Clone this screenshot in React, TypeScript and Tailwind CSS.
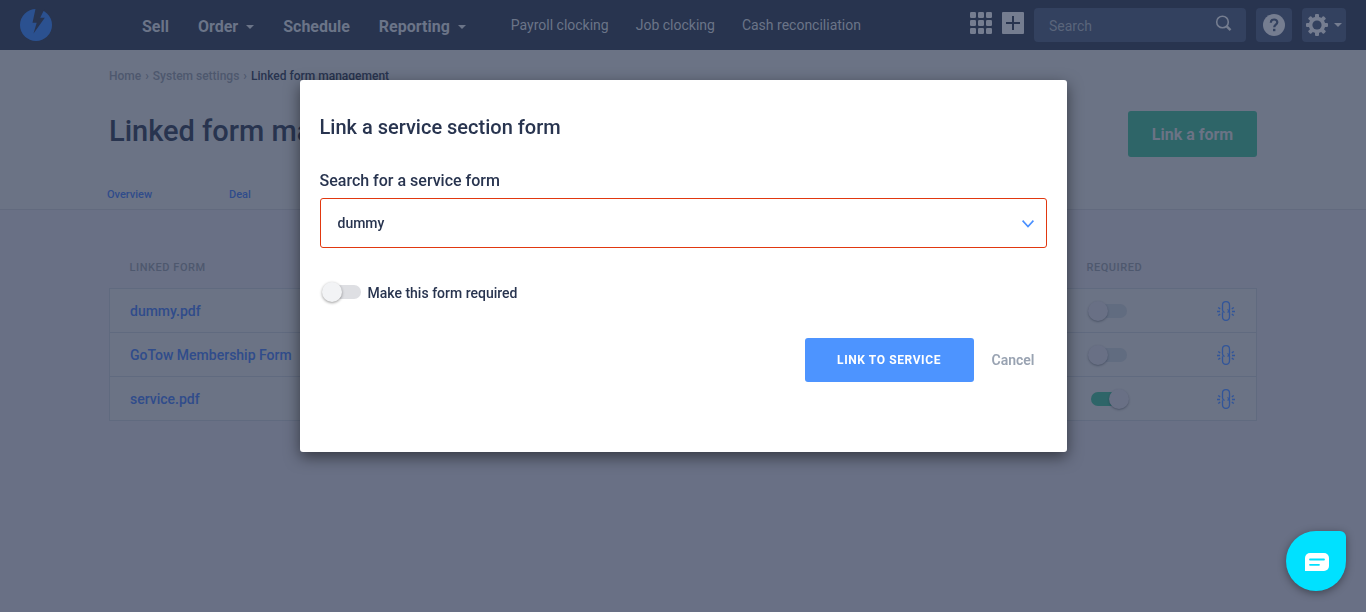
import type { ReactNode } from "react";

const forms = [
  { name: "dummy.pdf", required: false },
  { name: "GoTow Membership Form", required: false },
  { name: "service.pdf", required: true },
];

function Caret() {
  return (
    <svg width="8" height="4" viewBox="0 0 8 4" fill="currentColor" aria-hidden="true">
      <path d="M0 0h8L4 4z" />
    </svg>
  );
}

function UnlinkIcon() {
  return (
    <svg width="18" height="20" viewBox="0 0 18 20" fill="none" stroke="currentColor" strokeWidth="1.3" aria-hidden="true">
      <path d="M7.600 11.500C6.200 11 5.500 10 5.500 8.700V4.200C5.500 2.200 7 .7 9 .7s3.500 1.500 3.500 3.500v4.500c0 1.300-.8 2.200-2 2.600" />
      <path d="M10.400 8.500c1.400.5 2.100 1.500 2.100 2.800v4.500c0 2-1.500 3.500-3.500 3.500s-3.500-1.500-3.500-3.500v-4.500" />
      <path d="M0 10.500h3M1.200 6.500l2 1.400M1.200 14.500l2-1.400M18 10.500h-3M16.800 6.500l-2 1.400M16.800 14.500l-2-1.400" />
    </svg>
  );
}

function NavLink({ children, caret }: { children: ReactNode; caret?: boolean }) {
  return (
    <a href="#" className="flex items-center gap-2 whitespace-nowrap text-base font-bold">
      {children}
      {caret && <Caret />}
    </a>
  );
}

function Header() {
  return (
    <header className="flex h-[50px] items-center bg-[#28344f] px-5 text-[#6b7488]">
      <a href="#" aria-label="Dashboard" className="mr-[90px] shrink-0">
        <svg width="32" height="32" viewBox="0 0 32 32" aria-hidden="true">
          <circle cx="16" cy="16" r="16" fill="#2b5190" />
          <path d="M15.700-1 12.500 13.700h4.200L13.500 24.500 24.800 8.800h-4.600L25-1z" fill="#28344f" />
        </svg>
      </a>
      <nav className="flex items-center gap-[29px] pt-1">
        <NavLink>Sell</NavLink>
        <NavLink caret>Order</NavLink>
        <NavLink>Schedule</NavLink>
        <NavLink caret>Reporting</NavLink>
      </nav>
      <nav className="ml-[45px] flex items-center gap-[27px] whitespace-nowrap text-sm">
        <a href="#">Payroll clocking</a>
        <a href="#">Job clocking</a>
        <a href="#">Cash reconciliation</a>
      </nav>
      <div className="ml-auto flex items-center gap-[10px] text-[#757d90]">
        <button aria-label="Apps" className="-mt-1">
          <svg width="22" height="22" viewBox="0 0 22 22" fill="currentColor" aria-hidden="true">
            {[0, 8, 16].map((y) =>
              [0, 8, 16].map((x) => <rect key={`${x}-${y}`} x={x} y={y} width="6" height="6" rx="1.200" />),
            )}
          </svg>
        </button>
        <button aria-label="Add" className="-mt-1">
          <svg width="22" height="22" viewBox="0 0 22 22" aria-hidden="true">
            <rect width="22" height="22" rx="1" fill="currentColor" />
            <path d="M11 4v14M4 11h14" stroke="#28344f" strokeWidth="2" />
          </svg>
        </button>
        <label className="flex h-[34px] w-[212px] items-center rounded bg-[#33415f] pr-[14px] pl-[15px]">
          <input
            aria-label="Search"
            placeholder="Search"
            className="min-w-0 flex-1 bg-transparent pt-[2px] text-sm outline-none placeholder:text-[#5a657b]"
          />
          <svg width="17" height="17" viewBox="0 0 17 17" fill="none" stroke="currentColor" className="-mt-1" aria-hidden="true">
            <circle cx="7.500" cy="7" r="5.800" strokeWidth="1.600" />
            <path d="m11.500 11.200 4 4" strokeWidth="2.400" />
          </svg>
        </label>
        <button aria-label="Help" className="flex h-[34px] w-9 items-center justify-center rounded bg-[#33415f]">
          <svg width="22" height="22" viewBox="0 0 22 22" aria-hidden="true">
            <circle cx="11" cy="11" r="11" fill="currentColor" />
            <path d="M7.800 8.700c0-2 1.400-3.200 3.300-3.200s3.200 1.100 3.200 2.800c0 2.400-3.100 2.400-3.100 5" fill="none" stroke="#33415f" strokeWidth="2.200" />
            <rect x="10" y="14.800" width="2.400" height="2.400" fill="#33415f" />
          </svg>
        </button>
        <button aria-label="Settings" className="flex h-[34px] w-11 items-center justify-center gap-1.5 rounded bg-[#33415f]">
          <svg width="22" height="22" viewBox="0 0 22 22" fill="currentColor" aria-hidden="true">
            {[0, 45, 90, 135].map((a) => (
              <rect key={a} x="9" y="0" width="4" height="22" rx="1" transform={`rotate(${a} 11 11)`} />
            ))}
            <circle cx="11" cy="11" r="8.300" />
            <circle cx="11" cy="11" r="4.600" fill="#33415f" />
          </svg>
          <Caret />
        </button>
      </div>
    </header>
  );
}

function RowSwitch({ label, on }: { label: string; on: boolean }) {
  return (
    <input
      type="checkbox"
      role="switch"
      aria-label={label}
      defaultChecked={on}
      className="relative block h-[14px] w-9 appearance-none rounded-full bg-[#616c80] before:absolute before:-top-[3px] before:-left-[3px] before:size-5 before:rounded-full before:bg-[#697085] before:shadow-[0_1px_2px_rgba(30,40,60,0.4)] checked:bg-[#2e6568] checked:before:left-[18px]"
    />
  );
}

function Page() {
  return (
    <main>
      <div className="border-b border-[#626a7e] bg-[#6b7385] px-[109px]">
        <nav aria-label="Breadcrumb" className="flex h-[50px] items-center gap-1 pt-[2px] text-xs font-medium text-[#4e586e]">
          <a href="#">Home</a>
          <span>›</span>
          <a href="#">System settings</a>
          <span>›</span>
          <span className="text-[#28344f]">Linked form management</span>
        </nav>
        <div className="flex h-[70px] items-start justify-between pt-[11px]">
          <h1 className="text-[29px] leading-10 font-medium text-[#28344f]">Linked form management</h1>
          <button className="h-[46px] w-[129px] rounded-[3px] bg-[#2e6568] pt-[2px] text-base font-bold text-[#6b7385]">
            Link a form
          </button>
        </div>
        <nav className="-ml-[2px] flex h-[39px] items-center pt-3 text-[11px] font-medium text-[#304c8b]">
          <a href="#" className="w-[122px]">Overview</a>
          <a href="#">Deal</a>
        </nav>
      </div>
      <div className="px-[109px] pt-9">
        <table className="w-full border-collapse text-left">
          <thead>
            <tr className="h-[42px] align-middle text-[11px] tracking-wider text-[#4e586e]">
              <th className="pt-[2px] pl-5 font-medium">LINKED FORM</th>
              <th className="w-[110px] pt-[2px] font-medium">REQUIRED</th>
              <th className="w-[60px]" aria-label="Actions" />
            </tr>
          </thead>
          <tbody className="border border-[#606a7f] bg-[#6b7385]">
            {forms.map((form) => (
              <tr key={form.name} className="h-[44px] border-b border-[#606a7f]">
                <td className="pt-[2px] pl-5">
                  <a href="#" className="text-sm font-medium text-[#304c8b]">{form.name}</a>
                </td>
                <td className="pt-[2px] pl-1">
                  <RowSwitch label={`${form.name} required`} on={form.required} />
                </td>
                <td className="pt-[2px] pl-5">
                  <button aria-label={`Unlink ${form.name}`} className="block text-[#31559a]">
                    <UnlinkIcon />
                  </button>
                </td>
              </tr>
            ))}
          </tbody>
        </table>
      </div>
    </main>
  );
}

function LinkFormDialog() {
  return (
    <div className="fixed inset-0 flex items-start justify-center pt-20">
      <section
        role="dialog"
        aria-modal="true"
        aria-labelledby="dialog-title"
        className="w-[767px] max-w-full rounded-[3px] bg-white px-5 pt-8 pb-[70px] text-[#28344f] shadow-[0_5px_15px_rgba(0,0,0,0.5)]"
      >
        <h2 id="dialog-title" className="text-xl leading-[30px] font-medium">Link a service section form</h2>
        <label htmlFor="service-form" className="mt-[29px] block text-base leading-5 font-medium">
          Search for a service form
        </label>
        <div className="mt-[7px] grid items-center">
          <select
            id="service-form"
            className="col-start-1 row-start-1 h-[50px] w-full appearance-none rounded-[3px] border border-[#e1380f] bg-white px-[17px] text-sm font-medium"
          >
            <option>dummy</option>
          </select>
          <svg
            width="12"
            height="8"
            viewBox="0 0 12 8"
            fill="none"
            stroke="#4a90ff"
            strokeWidth="1.600"
            className="pointer-events-none col-start-1 row-start-1 mt-[2px] mr-[13px] justify-self-end"
            aria-hidden="true"
          >
            <path d="m.600.600 5.400 6 5.400-6" />
          </svg>
        </div>
        <label className="mt-[34px] flex h-5 items-center gap-[7px] pl-[5px] text-sm font-medium">
          <input
            type="checkbox"
            role="switch"
            className="relative block h-[14px] w-9 appearance-none rounded-full bg-[#dedfe3] before:absolute before:-top-[3px] before:-left-[3px] before:size-5 before:rounded-full before:bg-[#f2f3f5] before:shadow-[0_1px_3px_rgba(0,0,0,0.4)] checked:bg-[#35c98e] checked:before:left-[18px]"
          />
          <span className="pt-[2px]">Make this form required</span>
        </label>
        <div className="mt-9 flex items-center justify-end gap-[18px] pr-3">
          <button className="h-11 w-[169px] rounded-[3px] bg-[#4d94ff] text-xs font-bold tracking-wider text-white">
            LINK TO SERVICE
          </button>
          <button className="text-sm font-semibold text-[#99a3b2]">Cancel</button>
        </div>
      </section>
    </div>
  );
}

export default function App() {
  return (
    <div className="min-h-screen bg-[#697085] font-[Roboto,sans-serif]">
      <Header />
      <Page />
      <LinkFormDialog />
      <button
        aria-label="Open chat"
        className="fixed right-5 bottom-[21px] flex size-[60px] items-center justify-center rounded-[30px] rounded-tr-[6px] bg-[#00e1ff] shadow-[0_2px_8px_rgba(0,0,0,0.4)]"
      >
        <svg width="24" height="18" viewBox="0 0 24 18" className="mt-0.5 ml-0.5" aria-hidden="true">
          <path d="M5 0h14a5 5 0 0 1 5 5v8a5 5 0 0 1-5 5H0V5a5 5 0 0 1 5-5z" fill="#fff" />
          <path d="M5 6.500h14M5 11.800h9" stroke="#00e1ff" strokeWidth="1.800" strokeLinecap="round" />
        </svg>
      </button>
    </div>
  );
}
